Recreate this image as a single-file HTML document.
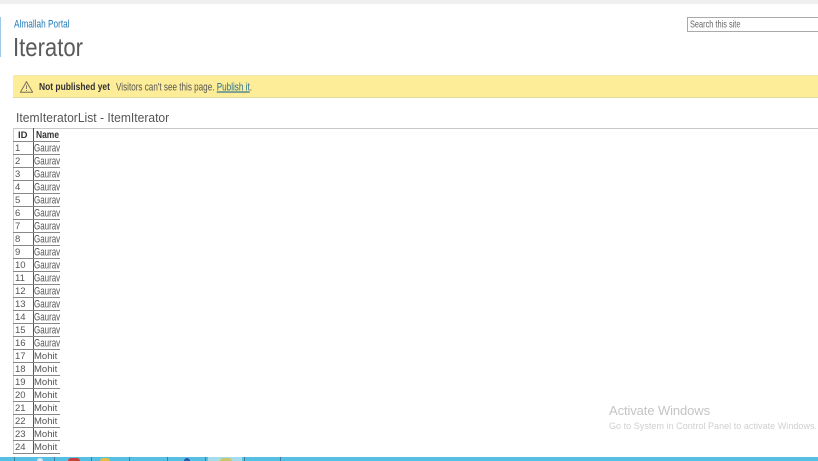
<!DOCTYPE html>
<html><head><meta charset="utf-8"><style>
html,body{margin:0;padding:0;background:#fff}
body{width:818px;height:461px;overflow:hidden;position:relative;font-family:"Liberation Sans",sans-serif;color:#444}
#p{position:absolute;inset:0;filter:blur(.35px)}
.a{position:absolute;white-space:nowrap;transform-origin:0 50%}
.r{position:absolute;left:13px;width:47px;height:13px;border-bottom:1px solid #888;box-sizing:border-box;font-size:9.5px;line-height:13px;color:#555}
.r span{position:absolute;left:21px;transform-origin:0 50%}
.r span.g{transform:scale(.84,1.12)}
.r i{position:absolute;left:2px;font-style:normal;transform-origin:0 50%}
</style></head><body><div id="p">
<div class="a" style="left:0;top:0;width:818px;height:4px;background:#f0f0f0"></div>
<div class="a" style="left:0;top:17px;width:1px;height:40px;background:#9fc9e6"></div>
<div class="a" style="left:14px;top:18px;font-size:9.5px;line-height:13px;transform:scale(.87,1.12);color:#1f7ab8">Almallah Portal</div>
<div class="a" style="left:13px;top:31px;font-size:26px;line-height:32px;transform:scale(.85,.98);color:#5a5a5a">Iterator</div>
<div class="a" style="left:687px;top:17px;width:131px;height:13px;border:1px solid #aaa;border-right:0"></div>
<div class="a" style="left:690px;top:18px;font-size:9px;line-height:13px;transform:scale(.82,1.15);color:#666">Search this site</div>
<div class="a" style="left:13px;top:75px;width:805px;height:23px;background:#fdec98;border-top:1px solid #f3e8b0;border-bottom:1px solid #e2d9a0;box-sizing:border-box"></div>
<svg class="a" style="left:20px;top:81px" width="13" height="12" viewBox="0 0 13 12"><path d="M6.500 .7 L12.700 11.300 H.3 Z" fill="none" stroke="#77705a" stroke-width="1"/><path d="M6.500 4.200V8M6.500 9V10" stroke="#77705a" stroke-width=".9"/></svg>
<div class="a" style="left:39px;top:82px;font-size:9.5px;line-height:12px;transform:scale(.89,1.08);font-weight:bold;color:#333">Not published yet</div>
<div class="a" style="left:116px;top:82px;font-size:9.5px;line-height:12px;transform:scale(.855,1.15);color:#555">Visitors can't see this page. <span style="color:#26708f;text-decoration:underline">Publish it</span>.</div>
<div class="a" style="left:16px;top:110px;font-size:13px;line-height:15px;color:#555;transform:scaleX(.93)">ItemIteratorList - ItemIterator</div>
<div class="a" style="left:13px;top:128px;width:805px;height:1px;background:#c8c8c8"></div>
<div class="a" style="left:13px;top:128px;width:1px;height:326px;background:#ccc"></div>
<div class="a" style="left:33px;top:128px;width:1px;height:326px;background:#555"></div>
<div class="r" style="top:129px;height:13px;font-weight:bold;color:#333"><i style="left:5px">ID</i><span style="left:23px;transform:scale(.89,1.08)">Name</span></div>
<div class="r" style="top:142px"><i>1</i><span class="g">Gaurav</span></div>
<div class="r" style="top:155px"><i>2</i><span class="g">Gaurav</span></div>
<div class="r" style="top:168px"><i>3</i><span class="g">Gaurav</span></div>
<div class="r" style="top:181px"><i>4</i><span class="g">Gaurav</span></div>
<div class="r" style="top:194px"><i>5</i><span class="g">Gaurav</span></div>
<div class="r" style="top:207px"><i>6</i><span class="g">Gaurav</span></div>
<div class="r" style="top:220px"><i>7</i><span class="g">Gaurav</span></div>
<div class="r" style="top:233px"><i>8</i><span class="g">Gaurav</span></div>
<div class="r" style="top:246px"><i>9</i><span class="g">Gaurav</span></div>
<div class="r" style="top:259px"><i>10</i><span class="g">Gaurav</span></div>
<div class="r" style="top:272px"><i>11</i><span class="g">Gaurav</span></div>
<div class="r" style="top:285px"><i>12</i><span class="g">Gaurav</span></div>
<div class="r" style="top:298px"><i>13</i><span class="g">Gaurav</span></div>
<div class="r" style="top:311px"><i>14</i><span class="g">Gaurav</span></div>
<div class="r" style="top:324px"><i>15</i><span class="g">Gaurav</span></div>
<div class="r" style="top:337px"><i>16</i><span class="g">Gaurav</span></div>
<div class="r" style="top:350px"><i>17</i><span>Mohit</span></div>
<div class="r" style="top:363px"><i>18</i><span>Mohit</span></div>
<div class="r" style="top:376px"><i>19</i><span>Mohit</span></div>
<div class="r" style="top:389px"><i>20</i><span>Mohit</span></div>
<div class="r" style="top:402px"><i>21</i><span>Mohit</span></div>
<div class="r" style="top:415px"><i>22</i><span>Mohit</span></div>
<div class="r" style="top:428px"><i>23</i><span>Mohit</span></div>
<div class="r" style="top:441px"><i>24</i><span>Mohit</span></div>
<div class="a" style="left:609px;top:403px;font-size:13px;line-height:15px;letter-spacing:-.1px;color:#c4c4c4">Activate Windows</div>
<div class="a" style="left:609px;top:420px;font-size:9px;line-height:12px;letter-spacing:.04px;color:#cfcfcf">Go to System in Control Panel to activate Windows.</div>
<div class="a" style="left:0;top:457px;width:818px;height:4px;background:#55c0e4"></div>
<div class="a" style="left:14px;top:457px;width:1px;height:4px;background:#3b7f9a"></div>
<div class="a" style="left:54px;top:457px;width:38px;height:4px;border-left:1px solid #3b7f9a;border-right:1px solid #3b7f9a;box-sizing:border-box"></div>
<div class="a" style="left:92px;top:457px;width:38px;height:4px;border-right:1px solid #3b7f9a;box-sizing:border-box"></div>
<div class="a" style="left:130px;top:457px;width:38px;height:4px;border-right:1px solid #3b7f9a;box-sizing:border-box"></div>
<div class="a" style="left:168px;top:457px;width:38px;height:4px;border-right:1px solid #3b7f9a;box-sizing:border-box"></div>
<div class="a" style="left:208px;top:457px;width:34px;height:4px;background:#a6dcec"></div>
<div class="a" style="left:244px;top:457px;width:37px;height:4px;border-left:1px solid #3b7f9a;border-right:1px solid #3b7f9a;box-sizing:border-box"></div>
<div class="a" style="left:37px;top:458px;width:6px;height:3px;background:#dfe8f2;border-radius:3px 3px 0 0"></div>
<div class="a" style="left:68px;top:458px;width:12px;height:3px;background:#c9403a;border-radius:6px 6px 0 0"></div>
<div class="a" style="left:100px;top:458px;width:10px;height:3px;background:#e3bf45;border-radius:5px 5px 0 0"></div>
<div class="a" style="left:184px;top:458px;width:6px;height:3px;background:#2a55a8;border-radius:3px 3px 0 0"></div>
<div class="a" style="left:220px;top:458px;width:12px;height:3px;background:#c8c86a;border-radius:6px 6px 0 0"></div>
</div></body></html>
